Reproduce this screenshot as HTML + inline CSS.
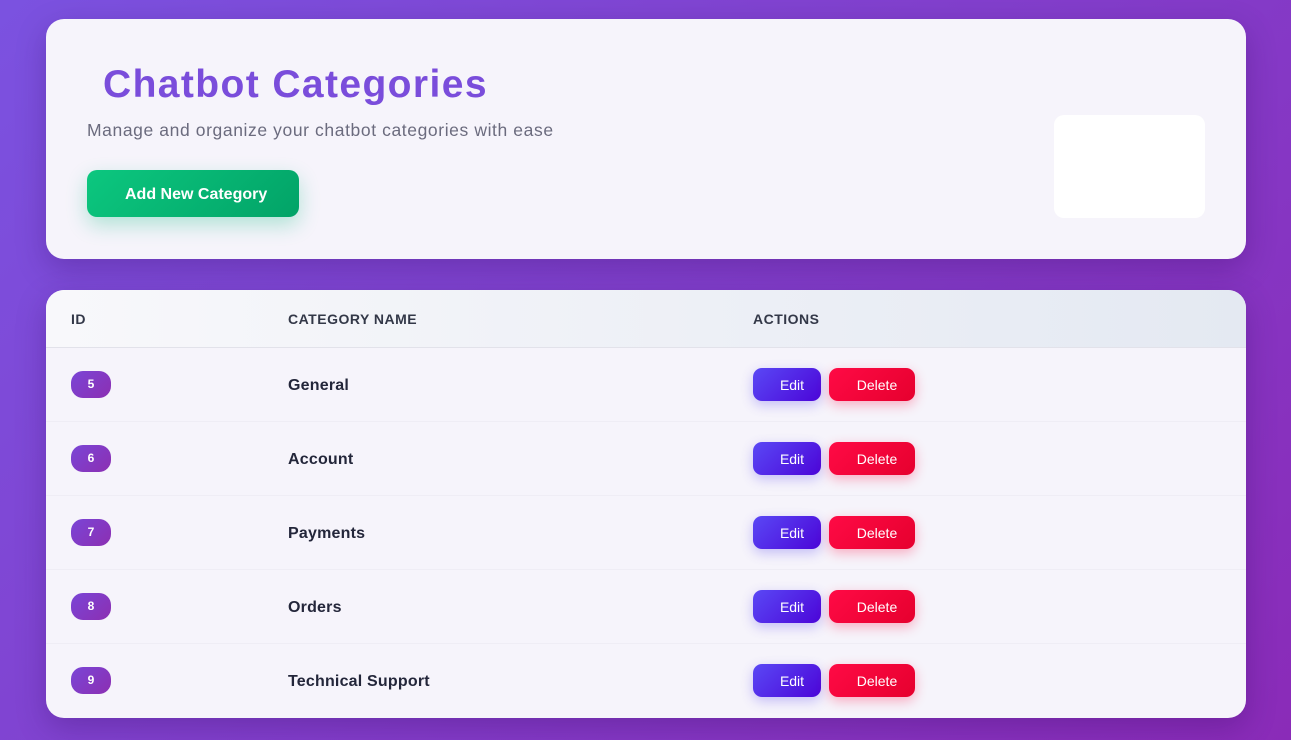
<!DOCTYPE html>
<html><head><style>
*{box-sizing:border-box;margin:0;padding:0}
body{width:1291px;height:740px;overflow:hidden;background:linear-gradient(135deg,#7b52e0,#8a2bb8);font-family:"Liberation Sans",sans-serif;position:relative}
.card{position:absolute;left:46px;width:1200px;background:#f6f4fb;border-radius:18px;box-shadow:0 10px 30px rgba(40,0,80,.25)}
.hdr{top:19px;height:240px}
h1{position:absolute;left:57px;top:44px;font-size:39px;font-weight:bold;color:#7a4ddb;letter-spacing:1.4px}
.sub{position:absolute;left:41px;top:101px;font-size:17.5px;color:#6b6b7e;letter-spacing:0.6px}
.add{position:absolute;left:41px;top:151px;width:212px;height:47px;border-radius:10px;background:linear-gradient(135deg,#0cc77f,#02a367);color:#fff;font-weight:bold;font-size:16px;line-height:49px;padding-left:38px;box-shadow:0 8px 20px rgba(16,185,129,.3)}
.wbox{position:absolute;left:1008px;top:96px;width:151px;height:103px;background:#fff;border-radius:10px}
.tbl{top:290px;height:428px;overflow:hidden}
.th{height:58px;background:linear-gradient(90deg,#f8f8fb,#e4e9f2);border-bottom:1px solid #e2e2ea;position:relative}
.th span{position:absolute;top:21px;font-size:14px;font-weight:bold;color:#333848;letter-spacing:.5px}
.row{height:74px;position:relative;border-bottom:1px solid #efedf5}
.id{position:absolute;left:25px;top:23px;width:40px;height:27px;border-radius:12px;background:linear-gradient(135deg,#7a45d6,#8c2fb2);color:#fff;font-size:12px;font-weight:bold;text-align:center;line-height:27px}
.nm{position:absolute;left:242px;top:29px;font-size:16px;font-weight:bold;color:#23263a;letter-spacing:.2px}
.ed{position:absolute;left:707px;top:20px;width:68px;height:33px;border-radius:9px;background:linear-gradient(135deg,#5a48f5,#4b05d8);color:#fff;font-size:14px;line-height:35px;text-align:center;padding-left:10px;box-shadow:0 4px 12px rgba(80,60,240,.3)}
.dl{position:absolute;left:783px;top:20px;width:86px;height:33px;border-radius:9px;background:linear-gradient(135deg,#ff0a45,#e6002e);color:#fff;font-size:14px;line-height:35px;text-align:center;padding-left:10px;box-shadow:0 4px 12px rgba(255,0,60,.3)}
</style></head><body>
<div class="card hdr">
<h1>Chatbot Categories</h1>
<div class="sub">Manage and organize your chatbot categories with ease</div>
<div class="add">Add New Category</div>
<div class="wbox"></div>
</div>
<div class="card tbl">
<div class="th"><span style="left:25px">ID</span><span style="left:242px">CATEGORY NAME</span><span style="left:707px">ACTIONS</span></div>
<div class="row"><div class="id">5</div><div class="nm">General</div><div class="ed">Edit</div><div class="dl">Delete</div></div>
<div class="row"><div class="id">6</div><div class="nm">Account</div><div class="ed">Edit</div><div class="dl">Delete</div></div>
<div class="row"><div class="id">7</div><div class="nm">Payments</div><div class="ed">Edit</div><div class="dl">Delete</div></div>
<div class="row"><div class="id">8</div><div class="nm">Orders</div><div class="ed">Edit</div><div class="dl">Delete</div></div>
<div class="row" style="border:none"><div class="id">9</div><div class="nm">Technical Support</div><div class="ed">Edit</div><div class="dl">Delete</div></div>
</div>
</body></html>
